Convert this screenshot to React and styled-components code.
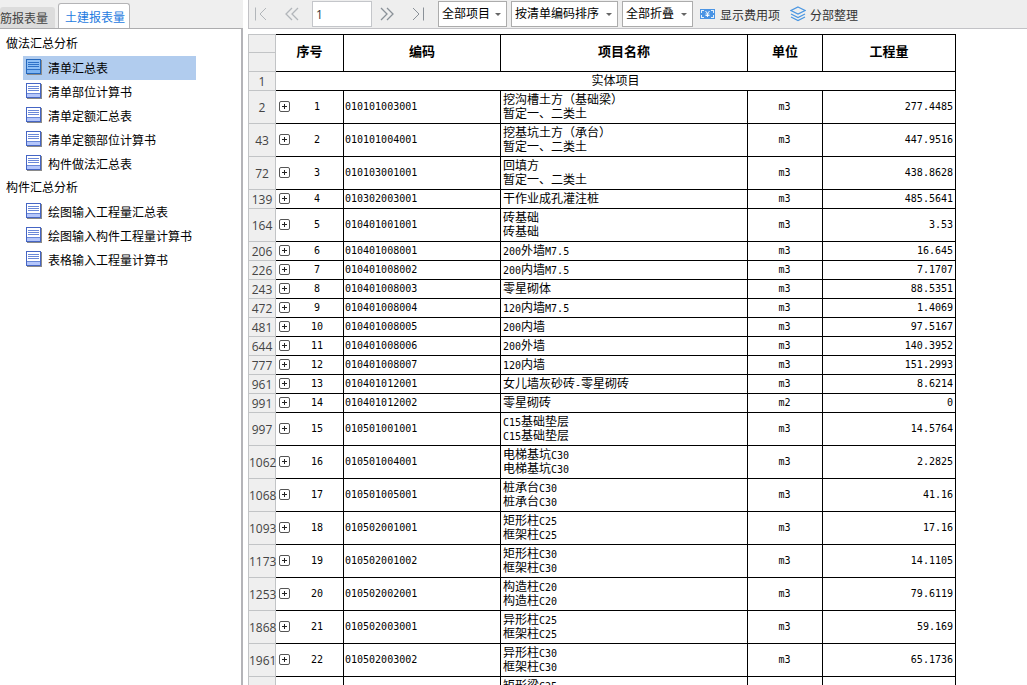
import React, { useState } from 'react';
import styled, { createGlobalStyle } from 'styled-components';

const GlobalStyle = createGlobalStyle`
  * {
    box-sizing: border-box;
  }

  body {
    margin: 0;
    overflow: hidden;
    background: #ffffff;
    color: #000000;
    font-family: "Liberation Sans", "Noto Sans CJK SC", sans-serif;
    font-size: 12px;
  }

  button, input, select {
    font-family: inherit;
    font-size: 12px;
  }
`;

const Page = styled.div`
  display: flex;
  gap: 5px;
  height: 100vh;
  overflow: hidden;
  background: #ffffff;
`;

const Sidebar = styled.aside`
  display: flex;
  flex-direction: column;
  flex: 0 0 243px;
`;

const Tabs = styled.div`
  display: flex;
  align-items: flex-end;
  gap: 3px;
  height: 28px;
  flex-shrink: 0;
  background: #efefef;
`;

const Tab = styled.button`
  display: flex;
  align-items: center;
  justify-content: flex-end;
  flex-shrink: 0;
  width: ${(props) => (props.$active ? '72px' : '55px')};
  height: ${(props) => (props.$active ? '25px' : '21px')};
  padding: ${(props) => (props.$active ? '0 4px' : '0 7px 0 0')};
  border: ${(props) => (props.$active ? '1px solid #b4b4b6' : 'none')};
  border-bottom: none;
  border-radius: 3px 3px 0 0;
  background: ${(props) => (props.$active ? '#ffffff' : '#dcdcdc')};
  color: ${(props) => (props.$active ? '#1e7be0' : '#444444')};
  white-space: nowrap;
`;

const Tree = styled.nav`
  flex: 1;
  padding-top: 3px;
  border-top: 1px solid #acacae;
  border-right: 2px solid #b4b4b8;
  background: #ffffff;
`;

const TreeTitle = styled.div`
  height: 24px;
  padding-left: 6px;
  line-height: 24px;
`;

const TreeList = styled.ul`
  margin: 0;
  padding: 0 45px 0 23px;
  list-style: none;
`;

const TreeItem = styled.button`
  display: flex;
  align-items: center;
  gap: 6px;
  width: 100%;
  height: 24px;
  padding: 0 3px 2px;
  border: none;
  background: ${(props) => (props.$active ? '#b1ccee' : 'transparent')};
  color: #000000;
  white-space: nowrap;
`;

const Main = styled.main`
  display: flex;
  flex-direction: column;
  flex: 1;
  min-width: 0;
`;

const Toolbar = styled.div`
  display: flex;
  align-items: center;
  height: 29px;
  flex-shrink: 0;
  border-left: 1px solid #c2c2c6;
  border-bottom: 1px solid #c2c2c6;
  background: #eeeeee;
`;

const Pager = styled.div`
  display: flex;
  align-items: center;
  gap: 9px;
  padding-left: ${(props) => props.$indent};
`;

const PagerButton = styled.button`
  display: flex;
  align-items: center;
  justify-content: center;
  width: 22px;
  height: 26px;
  padding: 0;
  border: none;
  background: transparent;
  color: ${(props) => (props.disabled ? '#b2b6ba' : '#8a9198')};
`;

const PageInput = styled.input`
  width: 60px;
  height: 26px;
  padding: 0 3px;
  border: 1px solid #c4c6ca;
  border-radius: 0;
  background: #ffffff;
  color: #333333;
  font-family: "Open Sans", sans-serif;
`;

const Filters = styled.div`
  display: flex;
  gap: 4px;
  padding-left: 9px;
`;

const SelectBox = styled.div`
  display: grid;
  align-items: center;
  width: ${(props) => props.$width};
  height: 26px;
  border: 1px solid #acacac;
  background: #ffffff;
`;

const Select = styled.select`
  grid-area: 1 / 1;
  width: 100%;
  height: 24px;
  padding: 0 3px;
  border: none;
  background: transparent;
  color: #000000;
  appearance: none;
`;

const Arrow = styled.span`
  grid-area: 1 / 1;
  justify-self: end;
  margin-right: 5px;
  border-top: 3px solid #666666;
  border-left: 3px solid transparent;
  border-right: 3px solid transparent;
  pointer-events: none;
`;

const Actions = styled.div`
  display: flex;
  gap: 10px;
  padding-left: 7px;
`;

const ActionButton = styled.button`
  display: flex;
  align-items: center;
  gap: 4px;
  padding: 0;
  border: none;
  background: transparent;
  color: #333333;
  white-space: nowrap;
`;

const Sheet = styled.div`
  flex: 1;
  min-height: 0;
  padding-top: 5px;
  overflow: hidden;
`;

const Table = styled.table`
  width: 708px;
  border-collapse: separate;
  border-spacing: 0;
  table-layout: fixed;
`;

const Col = styled.col`
  width: ${(props) => props.$width};
`;

const Gutter = styled.th`
  height: ${(props) => props.$height || '19px'};
  padding: 2px 0 0;
  border: 1px solid #c2c4c6;
  border-top: ${(props) => (props.$first ? '1px solid #c2c4c6' : 'none')};
  background: #efefef;
  color: #444444;
  font-family: "Open Sans", sans-serif;
  font-size: 12px;
  font-weight: normal;
  line-height: 16px;
  white-space: nowrap;
`;

const HeadCell = styled.th`
  padding: 0 0 3px;
  border: 1px solid #000000;
  border-left: none;
  font-size: 13px;
  font-weight: bold;
  line-height: 16px;
`;

const Cell = styled.td`
  padding: ${(props) => (props.$cjk ? '0 2px' : '0 2px 1px 1px')};
  border-right: 1px solid #000000;
  border-bottom: 1px solid #000000;
  font-family: ${(props) => (props.$cjk ? 'inherit' : '"DejaVu Sans Mono", monospace')};
  font-size: ${(props) => (props.$cjk ? '12px' : '10px')};
  line-height: 14px;
  text-align: ${(props) => props.$align || 'left'};
  white-space: nowrap;
`;

const NameLine = styled.div`
  height: 14px;
`;

const Latin = styled.span`
  font-family: "DejaVu Sans Mono", monospace;
  font-size: 10px;
`;

const IndexBox = styled.div`
  display: flex;
  align-items: center;
  padding-left: 2px;
`;

const IndexText = styled.span`
  flex: 1;
  padding-left: 3px;
  text-align: center;
`;

const Expander = styled.button`
  display: flex;
  padding: 0;
  border: none;
  background: transparent;
`;

const tree = [
  {
    title: '做法汇总分析',
    items: ['清单汇总表', '清单部位计算书', '清单定额汇总表', '清单定额部位计算书', '构件做法汇总表'],
  },
  {
    title: '构件汇总分析',
    items: ['绘图输入工程量汇总表', '绘图输入构件工程量计算书', '表格输入工程量计算书'],
  },
];

const columns = ['序号', '编码', '项目名称', '单位', '工程量'];

// line, code, name lines, unit, quantity
const rows = [
  [2, '010101003001', ['挖沟槽土方（基础梁）', '暂定一、二类土'], 'm3', '277.4485'],
  [43, '010101004001', ['挖基坑土方（承台）', '暂定一、二类土'], 'm3', '447.9516'],
  [72, '010103001001', ['回填方', '暂定一、二类土'], 'm3', '438.8628'],
  [139, '010302003001', ['干作业成孔灌注桩'], 'm3', '485.5641'],
  [164, '010401001001', ['砖基础', '砖基础'], 'm3', '3.53'],
  [206, '010401008001', ['200外墙M7.5'], 'm3', '16.645'],
  [226, '010401008002', ['200内墙M7.5'], 'm3', '7.1707'],
  [243, '010401008003', ['零星砌体'], 'm3', '88.5351'],
  [472, '010401008004', ['120内墙M7.5'], 'm3', '1.4069'],
  [481, '010401008005', ['200内墙'], 'm3', '97.5167'],
  [644, '010401008006', ['200外墙'], 'm3', '140.3952'],
  [777, '010401008007', ['120内墙'], 'm3', '151.2993'],
  [961, '010401012001', ['女儿墙灰砂砖-零星砌砖'], 'm3', '8.6214'],
  [991, '010401012002', ['零星砌砖'], 'm2', '0'],
  [997, '010501001001', ['C15基础垫层', 'C15基础垫层'], 'm3', '14.5764'],
  [1062, '010501004001', ['电梯基坑C30', '电梯基坑C30'], 'm3', '2.2825'],
  [1068, '010501005001', ['桩承台C30', '桩承台C30'], 'm3', '41.16'],
  [1093, '010502001001', ['矩形柱C25', '框架柱C25'], 'm3', '17.16'],
  [1173, '010502001002', ['矩形柱C30', '框架柱C30'], 'm3', '14.1105'],
  [1253, '010502002001', ['构造柱C20', '构造柱C20'], 'm3', '79.6119'],
  [1868, '010502003001', ['异形柱C25', '框架柱C25'], 'm3', '59.169'],
  [1961, '010502003002', ['异形柱C30', '框架柱C30'], 'm3', '65.1736'],
  [2013, '010503002001', ['矩形梁C25', '矩形梁C25'], 'm3', '12.4083'],
];

const ReportIcon = ({ active }) => (
  <svg width="16" height="16" viewBox="0 0 16 16" shapeRendering="crispEdges" aria-hidden="true">
    <path d="M1 15.5h15M15.5 1v15" stroke="#8a8a8a" fill="none" />
    <rect x="0.5" y="0.5" width="14" height="14" fill={active ? '#8fc0f6' : '#ffffff'} stroke={active ? '#2468bd' : '#4565c4'} />
    <rect x="1" y="11" width="13" height="3" fill={active ? '#7db4f3' : '#b4c6fb'} />
    <path d="M2 3.5h11M2 5.5h11M2 7.5h11M1 10.5h13" stroke={active ? '#2f72c8' : '#6a88d8'} />
  </svg>
);

const FirstIcon = () => (
  <svg width="14" height="14" viewBox="0 0 14 14" fill="none" stroke="currentColor" aria-hidden="true">
    <path d="M1.5 0.5v13M12 1L6 7l6 6" />
  </svg>
);

const LastIcon = () => (
  <svg width="14" height="14" viewBox="0 0 14 14" fill="none" stroke="currentColor" aria-hidden="true">
    <path d="M2 1l6 6-6 6M12.5 0.5v13" />
  </svg>
);

const PrevIcon = () => (
  <svg width="14" height="14" viewBox="0 0 14 14" fill="none" stroke="currentColor" strokeWidth="1.3" aria-hidden="true">
    <path d="M7 1L1 7l6 6M13 1L7 7l6 6" />
  </svg>
);

const NextIcon = () => (
  <svg width="14" height="14" viewBox="0 0 14 14" fill="none" stroke="currentColor" strokeWidth="1.3" aria-hidden="true">
    <path d="M1 1l6 6-6 6M7 1l6 6-6 6" />
  </svg>
);

const MoneyIcon = () => (
  <svg width="16" height="16" viewBox="0 0 16 16" fill="none" aria-hidden="true">
    <path d="M0 3h15v10H0z" fill="#4a94e4" />
    <path d="M1.5 7V4.500H4M11 4.500h2.500V7M1.500 9v2.500H4M11 11.500h2.500V9" stroke="#e4effb" shapeRendering="crispEdges" />
    <path d="M5.500 5l2 2.500 2-2.500M7.500 7.500V11M5.500 8h4M5.500 9.500h4" stroke="#ffffff" strokeWidth="0.9" />
  </svg>
);

const LayersIcon = () => (
  <svg width="16" height="16" viewBox="0 0 16 16" fill="none" stroke="#4a96e2" strokeWidth="1.2" aria-hidden="true">
    <path d="M8 1L15 4.500 8 8 1 4.500zM1 8l7 3.500L15 8M1 11l7 3.500 7-3.500" />
  </svg>
);

const PlusIcon = () => (
  <svg width="11" height="11" viewBox="0 0 11 11" fill="none" aria-hidden="true">
    <rect x="0.5" y="0.5" width="10" height="10" rx="1.5" stroke="#555555" />
    <path d="M3 5.5h5M5.500 3v5" stroke="#222222" />
  </svg>
);

const Dropdown = ({ label, width }) => (
  <SelectBox $width={width}>
    <Select aria-label={label} defaultValue={label}>
      <option>{label}</option>
    </Select>
    <Arrow />
  </SelectBox>
);

const Name = ({ text }) => (
  <NameLine>
    {text.split(/([A-Z0-9.-]+)/).map((part, i) => (i % 2 ? <Latin key={i}>{part}</Latin> : part))}
  </NameLine>
);

const ReportRow = ({ row, index }) => {
  const [line, code, names, unit, quantity] = row;

  return (
    <tr>
      <Gutter scope="row" $height={names.length > 1 ? '33px' : '19px'}>{line}</Gutter>
      <Cell>
        <IndexBox>
          <Expander type="button" aria-label={`展开 ${index}`}><PlusIcon /></Expander>
          <IndexText>{index}</IndexText>
        </IndexBox>
      </Cell>
      <Cell>{code}</Cell>
      <Cell $cjk>{names.map((name, i) => <Name key={i} text={name} />)}</Cell>
      <Cell $align="center">{unit}</Cell>
      <Cell $align="right">{quantity}</Cell>
    </tr>
  );
};

const App = () => {
  const [selected, setSelected] = useState('清单汇总表');
  const [page, setPage] = useState('1');

  return (
    <>
      <GlobalStyle />
      <Page>
        <Sidebar>
          <Tabs>
            <Tab type="button">筋报表量</Tab>
            <Tab type="button" $active>土建报表量</Tab>
          </Tabs>
          <Tree>
            {tree.map((group) => (
              <React.Fragment key={group.title}>
                <TreeTitle>{group.title}</TreeTitle>
                <TreeList>
                  {group.items.map((item) => (
                    <li key={item}>
                      <TreeItem type="button" $active={item === selected} onClick={() => setSelected(item)}>
                        <ReportIcon active={item === selected} />
                        {item}
                      </TreeItem>
                    </li>
                  ))}
                </TreeList>
              </React.Fragment>
            ))}
          </Tree>
        </Sidebar>
        <Main>
          <Toolbar>
            <Pager $indent="1px">
              <PagerButton type="button" aria-label="首页" disabled><FirstIcon /></PagerButton>
              <PagerButton type="button" aria-label="上一页" disabled><PrevIcon /></PagerButton>
              <PageInput aria-label="页码" value={page} onChange={(e) => setPage(e.target.value)} />
            </Pager>
            <Pager $indent="4px">
              <PagerButton type="button" aria-label="下一页"><NextIcon /></PagerButton>
              <PagerButton type="button" aria-label="末页"><LastIcon /></PagerButton>
            </Pager>
            <Filters>
              <Dropdown label="全部项目" width="69px" />
              <Dropdown label="按清单编码排序" width="107px" />
              <Dropdown label="全部折叠" width="71px" />
            </Filters>
            <Actions>
              <ActionButton type="button"><MoneyIcon />显示费用项</ActionButton>
              <ActionButton type="button"><LayersIcon />分部整理</ActionButton>
            </Actions>
          </Toolbar>
          <Sheet>
            <Table>
              <colgroup>
                <Col $width="28px" />
                <Col $width="68px" />
                <Col $width="157px" />
                <Col $width="247px" />
                <Col $width="75px" />
                <Col $width="133px" />
              </colgroup>
              <thead>
                <tr>
                  <Gutter $first />
                  {columns.map((column) => <HeadCell key={column} scope="col" rowSpan={2}>{column}</HeadCell>)}
                </tr>
                <tr>
                  <Gutter />
                </tr>
              </thead>
              <tbody>
                <tr>
                  <Gutter scope="row">1</Gutter>
                  <Cell $cjk $align="center" colSpan={5}>实体项目</Cell>
                </tr>
                {rows.map((row, i) => <ReportRow key={row[0]} row={row} index={i + 1} />)}
              </tbody>
            </Table>
          </Sheet>
        </Main>
      </Page>
    </>
  );
};

export default App;
